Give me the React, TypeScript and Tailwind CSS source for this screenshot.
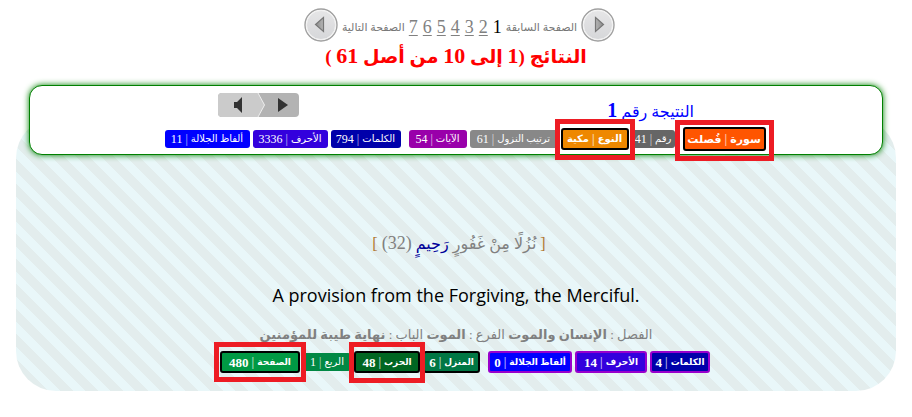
import type { ReactNode } from "react";

const serif = "font-['Liberation_Serif','DejaVu_Sans',serif]";

function Mark({ inset }: { inset: string }) {
  return (
    <span
      aria-hidden="true"
      className={`pointer-events-none absolute z-10 border-[5px] border-[#ed1c24] ${inset}`}
    />
  );
}

type BadgeProps = {
  label: string;
  value: string;
  look: string;
  size?: string;
  digits?: string;
  mark?: string;
};

function Badge({ label, value, look, size = "text-[10px]", digits = "text-[12px]", mark }: BadgeProps) {
  return (
    <span
      className={`relative flex shrink-0 items-center justify-center gap-[3px] whitespace-nowrap rounded-[3px] leading-none text-white ${size} ${look}`}
    >
      <span>{label}</span>
      <span className="text-[12px] opacity-70">|</span>
      {/^\d/.test(value) ? <span className={digits}>{value}</span> : <span>{value}</span>}
      {mark && <Mark inset={mark} />}
    </span>
  );
}

function RoundArrow({ flip }: { flip?: boolean }) {
  return (
    <svg width="34" height="34" viewBox="0 0 34 34" className={flip ? "-scale-x-100" : ""} aria-hidden="true">
      <defs>
        <linearGradient id="disc" x1="0" y1="0" x2="0" y2="1">
          <stop offset="0" stopColor="#e6e6e7" />
          <stop offset="1" stopColor="#d6d7d9" />
        </linearGradient>
        <linearGradient id="tri" x1="0" y1="0" x2="1" y2="0">
          <stop offset="0" stopColor="#b5b5b5" />
          <stop offset="1" stopColor="#8a8a8a" />
        </linearGradient>
      </defs>
      <circle cx="17" cy="17" r="16" fill="#fff" stroke="#a0a0a0" strokeWidth="1.4" />
      <circle cx="17" cy="17" r="14.5" fill="url(#disc)" stroke="#f2f2f2" strokeWidth="1" />
      <path d="M14.500 9.500 L22.500 16.500 L14.500 23.500 Z" fill="url(#tri)" stroke="#777" strokeWidth="1.2" />
    </svg>
  );
}

function PageStep({ children, icon, after }: { children: ReactNode; icon: ReactNode; after?: boolean }) {
  return (
    <a href="#" className="flex items-center gap-1 text-[11px] text-[#777777]">
      {!after && icon}
      <span className="mt-1 whitespace-nowrap">{children}</span>
      {after && icon}
    </a>
  );
}

export default function App() {
  return (
    <main dir="rtl" lang="ar" className={`bg-white px-4 pt-2 pb-[26px] ${serif}`}>
      <nav className="flex h-[34px] items-center justify-center gap-1 pl-[7px]">
        <PageStep icon={<RoundArrow />}>الصفحة السابقة</PageStep>
        <span className="mt-1 flex gap-[5px] text-[18px] leading-6 text-[#808080]">
          <span className="text-black">1</span>
          {[2, 3, 4, 5, 6, 7].map((n) => (
            <a key={n} href="#" className="underline underline-offset-2">
              {n}
            </a>
          ))}
        </span>
        <PageStep after icon={<RoundArrow flip />}>
          الصفحة التالية
        </PageStep>
      </nav>
      <h1 className="text-center text-[19px] leading-7 font-bold whitespace-nowrap text-[#ff0000]">
        النتائج (<span className="text-[22px]">1</span> إلى <span className="text-[22px]">10</span> من أصل{" "}
        <span className="text-[22px]">61</span> )
      </h1>

      <article className="mt-[14px]">
        <header className="relative z-10 mx-[13px] rounded-[13px] border border-[#008000] bg-white pb-[3px] shadow-[0_0_6px_#008000]">
          <div className="flex h-[41px] items-start justify-between px-[188px] pt-[7px]">
            <h2 className="mt-[5px] text-[16px] leading-6 whitespace-nowrap text-[#0000ff]">
              النتيجة رقم <b className="text-[20px]">1</b>
            </h2>
            <div dir="ltr" className="relative flex h-6 w-[81px] overflow-hidden rounded-[4px] bg-[#b3b3b3]">
              <svg className="absolute inset-0" width="81" height="24" viewBox="0 0 81 24" aria-hidden="true">
                <path d="M0 0 H40 L46.500 12 L40 24 H0 Z" fill="#cbcbcb" />
                <path d="M40 0 L46.500 12 L40 24" fill="none" stroke="#eee" />
                <path d="M16 9 h3 l5 -5 v16 l-5 -5 h-3 Z" fill="#333" />
                <path d="M60 5 L70 12 L60 19 Z" fill="#333" />
              </svg>
              <button type="button" aria-label="صوت" className="relative w-1/2" />
              <button type="button" aria-label="تشغيل" className="relative w-1/2" />
            </div>
          </div>
          <div className="flex h-6 items-center justify-center gap-2 pl-[18px]">
            <Badge
              label="سورة"
              value="فُصلت"
              size="text-[11px] font-bold"
              look="h-6 w-[83px] border-2 border-black bg-[#ff5500]"
              mark="-inset-x-[10px] -top-[9px] -bottom-[12px]"
            />
            <div className="flex items-center gap-[3px]">
              <Badge label="رقم" value="41" look="h-[18px] w-[43px] bg-[#666666]" />
              <Badge
                label="النوع"
                value="مكية"
                size="text-[10px] font-bold"
                look="h-[22px] w-[68px] border-2 border-black bg-[#ee8800]"
                mark="-inset-x-2 -top-[11px] -bottom-[12px]"
              />
              <Badge label="ترتيب النزول" value="61" look="h-[18px] w-[88px] bg-[#888888]" />
              <Badge label="الآيات" value="54" look="h-[18px] w-[58px] bg-[#9900aa]" />
            </div>
            <div className="flex items-center gap-[3px]">
              <Badge label="الكلمات" value="794" look="h-[18px] w-[70px] bg-[#0000aa]" />
              <Badge label="الأحرف" value="3336" look="h-[18px] w-[75px] bg-[#3300dd]" />
              <Badge label="ألفاظ الجلالة" value="11" look="h-[18px] w-[85px] bg-[#0000ff]" />
            </div>
          </div>
        </header>

        <section className="-mt-[37px] rounded-[40px] bg-[linear-gradient(45deg,#e3eded_25%,#e9f7f9_25%_50%,#e3eded_50%_75%,#e9f7f9_75%)] bg-[length:25px_25px] bg-[position:0_3px] pt-[109px] pb-[18px] text-center">
          <p className="pl-[6px] text-[16px] leading-8 whitespace-nowrap text-[#808080]">
            <span className="text-[#b07830]">[ </span>
            نُزُلًا مِنْ غَفُورٍ <span className="text-[#000099]">رَحِيمٍ</span>{" "}
            <span className="text-[18px]">(32)</span>
            <span className="text-[#b07830]"> ]</span>
          </p>
          <p dir="ltr" lang="en" className="mt-[23px] font-['Open_Sans',sans-serif] text-[18px] leading-6 text-black">
            A provision from the Forgiving, the Merciful.
          </p>
          <p className="mt-4 text-[13px] leading-6 whitespace-nowrap text-[#808080]">
            الفصل : <b>الإنسان والموت</b> الفرع : <b>الموت</b> الباب : <b>نهاية طيبة للمؤمنين</b>
          </p>
          <div className="mt-1 flex items-center justify-center gap-2 pl-[18px]">
            <div className="flex items-center gap-[3px]">
              <Badge label="الكلمات" value="4" size="text-[9px] font-bold" digits="text-[13px]" look="h-[22px] w-[60px] border-2 border-[#9900cc] bg-[#0000aa]" />
              <Badge label="الأحرف" value="14" size="text-[9px] font-bold" digits="text-[13px]" look="h-[22px] w-[72px] border-2 border-[#9900cc] bg-[#3300dd]" />
              <Badge label="ألفاظ الجلالة" value="0" size="text-[9px] font-bold" digits="text-[13px]" look="h-[22px] w-[84px] border-2 border-[#9900cc] bg-[#0000ff]" />
            </div>
            <div className="flex items-center gap-[3px]">
              <Badge label="المنزل" value="6" size="text-[9px] font-bold" digits="text-[13px]" look="h-[22px] w-[57px] border-2 border-black bg-[#007744]" />
              <Badge
                label="الحزب"
                value="48"
                size="text-[9px] font-bold"
                digits="text-[13px]"
                look="h-[22px] w-[66px] border-2 border-black bg-[#006622]"
                mark="-inset-x-[7px] -top-[11px] -bottom-[12px]"
              />
              <Badge label="الربع" value="1" look="h-[18px] w-[48px] bg-[#008844]" />
              <Badge
                label="الصفحة"
                value="480"
                size="text-[9px] font-bold"
                digits="text-[13px]"
                look="h-[22px] w-[80px] border-2 border-black bg-[#009944]"
                mark="-inset-x-2 -top-[11px] -bottom-[11px]"
              />
            </div>
          </div>
        </section>
      </article>
    </main>
  );
}
